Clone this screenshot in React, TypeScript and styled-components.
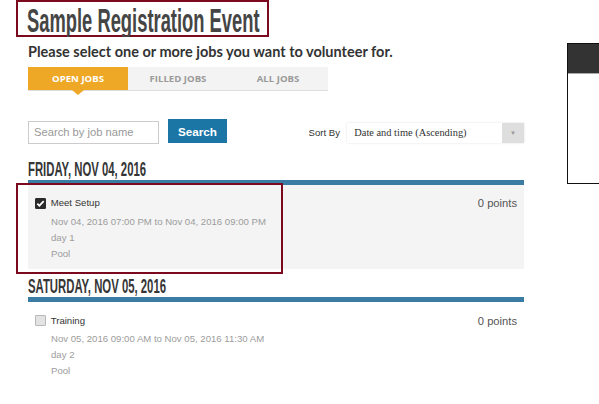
import React from 'react';
import styled, { createGlobalStyle, css } from 'styled-components';

const GlobalStyle = createGlobalStyle`
  html, body { margin: 0; padding: 0; background: #fff; overflow: hidden; }
  body { font-family: "Liberation Sans", Arial, sans-serif; color: #333; }
  * { box-sizing: border-box; }
`;

const Page = styled.div`
  display: flex;
  align-items: flex-start;
  padding-left: 28px;
  width: 599px;
  height: 404px;
  overflow: hidden;
`;

const Main = styled.main`
  flex: 0 0 496px;
  display: flex;
  flex-direction: column;
`;

const TitleBox = styled.div`
  margin-left: -12px;
  width: 253px;
  height: 37px;
  border: 2.67px solid #7b0a1e;
  padding: 7.3px 0 0 9.3px;
  clip-path: inset(0);
`;

const Title = styled.h1`
  display: inline-block;
  margin: 0;
  font-family: "Liberation Sans", Arial, sans-serif;
  font-weight: 700;
  font-size: 33.5px;
  line-height: 24px;
  color: #454545;
  white-space: nowrap;
  transform: scaleX(0.548);
  transform-origin: left center;
`;

const Lead = styled.p`
  margin: 5.6px 0 0;
  font-family: Lato, "Open Sans", sans-serif;
  font-weight: 700;
  font-size: 14.5px;
  line-height: 18px;
  color: #333;
  white-space: nowrap;
`;

const Tabs = styled.div`
  display: flex;
  width: 300px;
  margin-top: 6px;
  background: #f3f3f3;
  border-bottom: 1px solid #ddd;
`;

const Tab = styled.div<{ $active?: boolean }>`
  position: relative;
  width: 100px;
  height: 23.3px;
  display: flex;
  align-items: center;
  justify-content: center;
  font-family: "Open Sans", sans-serif;
  font-weight: 700;
  font-size: 9.6px;
  text-transform: uppercase;
  color: ${(p) => (p.$active ? '#fff' : '#9a9a9a')};
  background: ${(p) => (p.$active ? '#eea826' : 'transparent')};
  ${(p) =>
    p.$active &&
    css`
      &::after {
        content: '';
        position: absolute;
        left: 50%;
        top: 100%;
        margin-left: -6px;
        border-left: 6px solid transparent;
        border-right: 6px solid transparent;
        border-top: 5.5px solid #eea826;
      }
    `}
`;

const Toolbar = styled.div`
  display: flex;
  justify-content: space-between;
  align-items: flex-start;
  margin-top: 28px;
  margin-bottom: 8px;
`;

const SearchGroup = styled.div`
  display: flex;
  align-items: flex-start;
  gap: 9px;
`;

const SearchInput = styled.input`
  margin: 2px 0 0;
  width: 131px;
  height: 23px;
  border: 1px solid #ccc;
  padding: 0 5px;
  font-family: "Liberation Sans", Arial, sans-serif;
  font-size: 11.2px;
  color: #333;
  outline: none;
  &::placeholder { color: #999; }
`;

const SearchButton = styled.button`
  width: 59px;
  height: 24.3px;
  border: none;
  padding: 0;
  background: #1b76a6;
  color: #fff;
  font-family: "Liberation Sans", Arial, sans-serif;
  font-weight: 700;
  font-size: 11.7px;
`;

const SortGroup = styled.div`
  display: flex;
  align-items: center;
  gap: 7px;
  margin-top: 4px;
`;

const SortLabel = styled.span`
  font-size: 9.6px;
  color: #333;
`;

const SelectBox = styled.div`
  width: 177px;
  height: 20px;
  display: flex;
  align-items: center;
  padding-left: 7.3px;
  background: #fff;
  box-shadow: 0 0 2px rgba(0, 0, 0, 0.12);
  font-family: "Liberation Serif", "Times New Roman", serif;
  font-size: 10.4px;
  color: #333;
`;

const SelectArrow = styled.span`
  margin-left: auto;
  width: 22px;
  height: 100%;
  display: flex;
  align-items: center;
  justify-content: center;
  background: #dedede;
  color: #999;
  font-size: 6px;
`;

const DayHeading = styled.h2`
  margin: 7px 0 0;
  font-family: "Liberation Sans", Arial, sans-serif;
  font-weight: 700;
  font-size: 21px;
  line-height: 20px;
  color: #363636;
  white-space: nowrap;
  transform: scaleX(0.54);
  transform-origin: left center;
`;

const DayBar = styled.div`
  height: 5px;
  margin-top: 1px;
  background: #3b7ca5;
`;

const JobCard = styled.div<{ $shaded?: boolean; $highlighted?: boolean }>`
  position: relative;
  display: flex;
  justify-content: space-between;
  align-items: flex-start;
  padding: 10.5px 7px 7.5px;
  background: ${(p) => (p.$shaded ? '#f4f4f4' : 'transparent')};
  ${(p) =>
    p.$highlighted &&
    css`
      &::after {
        content: '';
        position: absolute;
        left: -12px;
        top: -2px;
        width: 263px;
        height: 87px;
        border: 2.67px solid #7b0a1e;
        pointer-events: none;
      }
    `}
`;

const JobMain = styled.div`
  display: flex;
  flex-direction: column;
`;

const NameRow = styled.div`
  display: flex;
  align-items: center;
  gap: 4.7px;
  font-size: 9.6px;
  line-height: 16px;
  color: #333;
`;

const Check = styled.span<{ $checked?: boolean }>`
  flex: none;
  width: 11px;
  height: 11px;
  display: inline-flex;
  align-items: center;
  justify-content: center;
  border-radius: 1px;
  background: ${(p) => (p.$checked ? '#2b2b2b' : '#e3e3e3')};
  border: 1px solid ${(p) => (p.$checked ? '#2b2b2b' : '#b8b8b8')};
`;

const Details = styled.div`
  margin-top: 2.3px;
  padding-left: 16px;
  font-size: 9.6px;
  line-height: 16px;
  color: #9c9c9c;
`;

const Points = styled.span`
  font-size: 11.2px;
  line-height: 16px;
  color: #555;
`;

const Sidebar = styled.aside`
  flex: 0 0 60px;
  margin-left: 43px;
  margin-top: 43px;
  height: 141px;
  border: 1px solid #111;
  border-right: none;
`;

const SidebarHeader = styled.div`
  height: 30px;
  background: #333;
  border-bottom: 1px solid #aaa;
`;

type Job = {
  name: string;
  time: string;
  desc: string;
  place: string;
  checked?: boolean;
  highlighted?: boolean;
};

const days: { label: string; jobs: Job[] }[] = [
  {
    label: 'FRIDAY, NOV 04, 2016',
    jobs: [
      {
        name: 'Meet Setup',
        time: 'Nov 04, 2016 07:00 PM to Nov 04, 2016 09:00 PM',
        desc: 'day 1',
        place: 'Pool',
        checked: true,
        highlighted: true,
      },
    ],
  },
  {
    label: 'SATURDAY, NOV 05, 2016',
    jobs: [
      {
        name: 'Training',
        time: 'Nov 05, 2016 09:00 AM to Nov 05, 2016 11:30 AM',
        desc: 'day 2',
        place: 'Pool',
      },
    ],
  },
];

const CheckMark = () => (
  <svg width="9" height="9" viewBox="0 0 9 9">
    <path d="M1.3 4.6 L3.4 6.7 L7.7 2.1" fill="none" stroke="#fff" strokeWidth="1.7" />
  </svg>
);

export default function App() {
  return (
    <>
      <GlobalStyle />
      <Page>
        <Main>
          <TitleBox>
            <Title>Sample Registration Event</Title>
          </TitleBox>
          <Lead>Please select one or more jobs you want to volunteer for.</Lead>
          <Tabs>
            <Tab $active>Open Jobs</Tab>
            <Tab>Filled Jobs</Tab>
            <Tab>All Jobs</Tab>
          </Tabs>
          <Toolbar>
            <SearchGroup>
              <SearchInput placeholder="Search by job name" />
              <SearchButton>Search</SearchButton>
            </SearchGroup>
            <SortGroup>
              <SortLabel>Sort By</SortLabel>
              <SelectBox>
                Date and time (Ascending)
                <SelectArrow>▼</SelectArrow>
              </SelectBox>
            </SortGroup>
          </Toolbar>
          {days.map((day) => (
            <React.Fragment key={day.label}>
              <DayHeading>{day.label}</DayHeading>
              <DayBar />
              {day.jobs.map((job) => (
                <JobCard key={job.name} $shaded={job.checked} $highlighted={job.highlighted}>
                  <JobMain>
                    <NameRow>
                      <Check $checked={job.checked}>{job.checked && <CheckMark />}</Check>
                      {job.name}
                    </NameRow>
                    <Details>
                      <div>{job.time}</div>
                      <div>{job.desc}</div>
                      <div>{job.place}</div>
                    </Details>
                  </JobMain>
                  <Points>0 points</Points>
                </JobCard>
              ))}
            </React.Fragment>
          ))}
        </Main>
        <Sidebar>
          <SidebarHeader />
        </Sidebar>
      </Page>
    </>
  );
}
